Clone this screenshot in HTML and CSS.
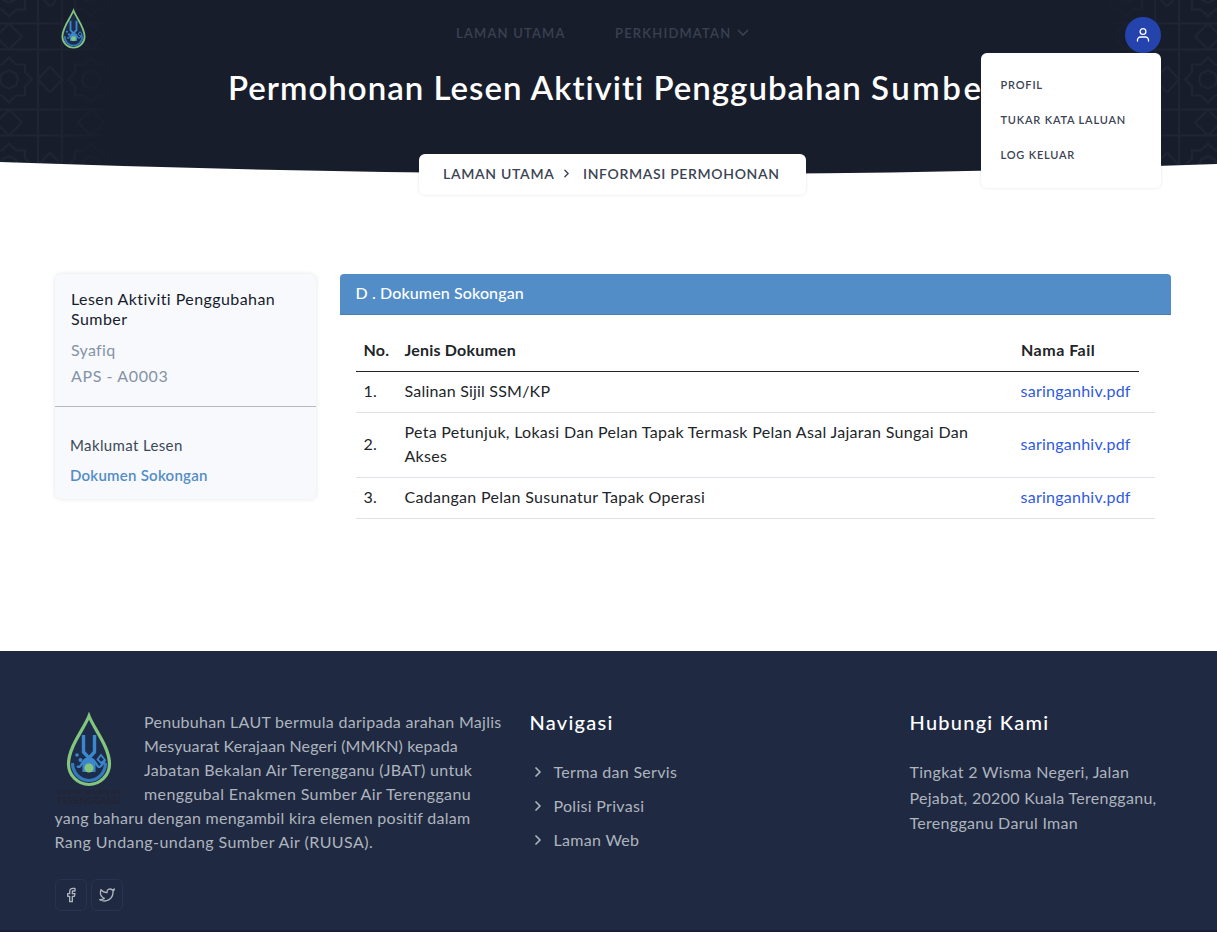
FILE: index.html
```html
<!DOCTYPE html>
<html lang="ms">
<head>
<meta charset="utf-8">
<title>Informasi Permohonan</title>
<link rel="stylesheet" href="styles.css">
</head>
<body>
<svg class="defs" width="0" height="0" aria-hidden="true">
  <defs>
    <symbol id="drop" viewBox="0 0 46 76">
      <path d="M23 4C18 17 2.500 35 2.500 52A20.500 20.500 0 0 0 43.500 52C43.500 35 28 17 23 4Z" fill="#1d2c4a" stroke="#83c57c" stroke-width="3.200"/>
      <path d="M6.500 51A16.500 17.500 0 0 0 39.500 51" fill="none" stroke="#3579bd" stroke-width="3.200"/>
      <path d="M17.500 23V40L23 46L28.500 40V23" fill="none" stroke="#3c87cb" stroke-width="3.400"/>
      <path d="M11 54C15 58 16 48 20 47H26C30 48 31 58 35 54L39 49" fill="none" stroke="#3c87cb" stroke-width="2.200"/>
      <path d="M16.500 60V52L20 46H26L29.500 52V60Z" fill="#3c87cb"/>
      <circle cx="11" cy="43" r="1.800" fill="#3c87cb"/><circle cx="14.500" cy="48" r="2" fill="#3c87cb"/>
      <path d="M35 43L39 48L35 51L31.500 47.500Z" fill="none" stroke="#3c87cb" stroke-width="1.800"/>
      <circle cx="23" cy="56" r="4.500" fill="#83c57c"/>
    </symbol>
    <symbol id="chev" viewBox="0 0 24 24"><path d="M9 18l6-6-6-6" fill="none" stroke="currentColor" stroke-width="2.600" stroke-linecap="round" stroke-linejoin="round"/></symbol>
    <pattern id="tile" width="82" height="86" patternUnits="userSpaceOnUse" x="-32" y="36.500">
      <g fill="none" stroke="#2a3240" stroke-width="2.200">
        <path d="M41 21L48 28H57V36L64 43L57 50V59H48L41 66L34 59H25V50L18 43L25 36V28H34Z"/>
        <path d="M41 34L48 37L50 43L48 49L41 52L34 49L32 43L34 37Z"/>
        <path d="M0 30L12 43L0 56M82 30L70 43L82 56M28 0L41 13L54 0M28 86L41 73L54 86"/>
        <path d="M12 13V73M70 13V73M12 13H70M12 73H70"/>
        <path d="M0 13H12V0M70 0V13H82M0 73H12V86M70 86V73H82"/>
      </g>
    </pattern>
  </defs>
</svg>

<header class="hero">
  <svg class="ornament left" width="120" height="176"><rect width="120" height="176" fill="url(#tile)"/></svg>
  <svg class="ornament right" width="120" height="176"><rect width="120" height="176" fill="url(#tile)"/></svg>
  <nav class="topbar">
    <svg class="brand" width="26" height="43"><use href="#drop"/></svg>
    <div class="menu">
      <a class="menu-home">LAMAN UTAMA</a>
      <a class="menu-serv">PERKHIDMATAN</a>
      <svg class="menu-arrow" width="12" height="8" viewBox="0 0 12 8"><path d="M1.500 1.500L6 6l4.500-4.500" fill="none" stroke="currentColor" stroke-width="1.700" stroke-linecap="round"/></svg>
    </div>
    <div class="user">
      <svg width="14" height="16" viewBox="0 0 14 16" fill="none" stroke="#fff" stroke-width="1.300" stroke-linecap="round"><circle cx="7" cy="4.500" r="2.900"/><path d="M1.500 14v-1a3 3 0 0 1 3-3h5a3 3 0 0 1 3 3v1"/></svg>
    </div>
  </nav>
  <h1 class="title">Permohonan Lesen Aktiviti Penggubahan <span class="title-end">Sumber</span></h1>
  <svg class="curve" viewBox="0 0 1217 16" preserveAspectRatio="none"><path d="M0 2Q640 25 1217 4V16H0Z" fill="#fff"/></svg>
  <div class="crumbs">
    <span class="crumb-home">LAMAN UTAMA</span>
    <svg class="crumb-arrow" width="13" height="13"><use href="#chev"/></svg>
    <span class="crumb-here">INFORMASI PERMOHONAN</span>
  </div>
  <div class="dropdown">
    <a>PROFIL</a>
    <a>TUKAR KATA LALUAN</a>
    <a>LOG KELUAR</a>
  </div>
</header>

<main class="main">
  <aside class="side">
    <div class="side-top">
      <h2><span>Lesen Aktiviti Penggubahan</span><br>Sumber</h2>
      <p>Syafiq</p>
      <p class="code">APS - A0003</p>
    </div>
    <div class="side-nav">
      <a class="side-link">Maklumat Lesen</a>
      <a class="side-link active">Dokumen Sokongan</a>
    </div>
  </aside>
  <section class="card">
    <div class="card-head">D . Dokumen Sokongan</div>
    <table class="docs">
      <colgroup><col class="c-no"><col class="c-type"><col class="c-file"><col class="c-end"></colgroup>
      <thead><tr><th>No.</th><th>Jenis Dokumen</th><th class="th-file">Nama Fail</th></tr></thead>
      <tbody>
        <tr><td>1.</td><td class="tight">Salinan Sijil SSM/KP</td><td><a>saringanhiv.pdf</a></td><td></td></tr>
        <tr><td>2.</td><td><span>Peta Petunjuk, Lokasi Dan Pelan Tapak Termask Pelan Asal Jajaran Sungai Dan</span><br>Akses</td><td><a>saringanhiv.pdf</a></td><td></td></tr>
        <tr><td>3.</td><td>Cadangan Pelan Susunatur Tapak Operasi</td><td><a>saringanhiv.pdf</a></td><td></td></tr>
      </tbody>
    </table>
  </section>
</main>

<footer class="footer">
  <div class="about">
    <svg class="foot-logo" width="68" height="96" viewBox="0 0 68 96">
      <use href="#drop" x="11" y="2" width="46" height="76"/>
      <text x="2" y="84" textLength="64" lengthAdjust="spacingAndGlyphs" class="logo-sm">JABATAN SUMBER AIR</text>
      <text x="2" y="94" textLength="64" lengthAdjust="spacingAndGlyphs" class="logo-lg">TERENGGANU</text>
    </svg>
    <p><span class="l1">Penubuhan LAUT bermula daripada arahan Majlis</span><br><span class="l2">Mesyuarat Kerajaan Negeri (MMKN) kepada</span><br><span class="l3">Jabatan Bekalan Air Terengganu (JBAT) untuk</span><br><span class="l4">menggubal Enakmen Sumber Air Terengganu</span><br><span class="l5">yang baharu dengan mengambil kira elemen positif dalam</span><br><span class="l6">Rang Undang-undang Sumber Air (RUUSA).</span></p>
    <div class="social">
      <a><svg width="16" height="16" viewBox="0 0 24 24"><path d="M18 2h-3a5 5 0 0 0-5 5v3H7v4h3v8h4v-8h3l1-4h-4V7a1 1 0 0 1 1-1h3z"/></svg></a>
      <a><svg width="16" height="16" viewBox="0 0 24 24"><path d="M23 3a10.900 10.900 0 0 1-3.140 1.530 4.480 4.480 0 0 0-7.860 3v1A10.660 10.660 0 0 1 3 4s-4 9 5 13a11.640 11.640 0 0 1-7 2c9 5 20 0 20-11.500a4.500 4.500 0 0 0-.08-.83A7.720 7.720 0 0 0 23 3z"/></svg></a>
    </div>
  </div>
  <div class="links">
    <h3>Navigasi</h3>
    <a><svg width="16" height="16"><use href="#chev"/></svg><span>Terma dan Servis</span></a>
    <a><svg width="16" height="16"><use href="#chev"/></svg><span>Polisi Privasi</span></a>
    <a><svg width="16" height="16"><use href="#chev"/></svg><span>Laman Web</span></a>
  </div>
  <div class="contact">
    <h3>Hubungi Kami</h3>
    <p><span>Tingkat 2 Wisma Negeri, Jalan</span><br><span>Pejabat, 20200 Kuala Terengganu,</span><br><span>Terengganu Darul Iman</span></p>
  </div>
</footer>
</body>
</html>
```
FILE: styles.css
```css
* { box-sizing: border-box; }
body {
  margin: 0;
  width: 1217px;
  height: 932px;
  overflow: hidden;
  background: #fff;
  font-family: Lato, "Open Sans", sans-serif;
  font-size: 16px;
  line-height: 24px;
  color: #212529;
}
h1, h2, h3, p { margin: 0; font-weight: 400; }
span, a, h1, th { white-space: nowrap; }
.defs { position: absolute; }

.hero { position: relative; height: 176px; background: #181d2c; }
.ornament { position: absolute; top: 0; opacity: .38; }
.ornament.left { left: 0; mask-image: linear-gradient(to right, #000 40%, transparent); }
.ornament.right { right: 0; transform: scaleX(-1); mask-image: linear-gradient(to right, #000 40%, transparent); }
.topbar { position: relative; display: flex; height: 68px; padding: 0 56px 0 61px; }
.brand { margin-top: 8px; width: 25px; height: 42px; }
.menu { display: flex; align-items: center; height: 20px; margin: 23px 0 0 370px; color: #3a4151; font-size: 13px; font-weight: 600; }
.menu-home { width: 159px; letter-spacing: 1.200px; }
.menu-serv { width: 122px; letter-spacing: 1.200px; }
.user { display: flex; align-items: center; justify-content: center; width: 36px; height: 36px; margin: 17px 0 0 auto; border-radius: 50%; background: #2443ac; }
.title { position: relative; padding-left: 228px; font-size: 33px; line-height: 38px; font-weight: 600; letter-spacing: 1px; color: #fff; }
.title-end { letter-spacing: 2.600px; }
.curve { position: absolute; left: 0; bottom: 0; width: 1217px; height: 16px; }
.crumbs {
  position: absolute; left: 419px; top: 154px; width: 387px; height: 41px;
  display: flex; align-items: center; padding: 0 0 2px 24px;
  border-radius: 6px; background: #fff; box-shadow: 0 0 3px rgba(60, 72, 88, .15);
  color: #3c4353; font-size: 14px; font-weight: 600;
}
.crumb-home { width: 117px; letter-spacing: .7px; }
.crumb-arrow { margin-right: 10px; }
.crumb-here { letter-spacing: .65px; }
.dropdown {
  position: absolute; left: 981px; top: 53px; width: 180px; height: 135px;
  display: flex; flex-direction: column; padding: 14px 19.500px;
  border-radius: 6px; background: #fff; box-shadow: 0 0 3px rgba(60, 72, 88, .15);
  color: #3c4353; font-size: 11px; line-height: 35px; font-weight: 600; letter-spacing: .8px;
}

.main { display: grid; grid-template-columns: 261px 831px; column-gap: 24px; align-items: start; height: 475px; padding: 98px 0 0 55px; }
.side { height: 225px; border-radius: 6px; background: #f8f9fc; box-shadow: 0 0 4px rgba(60, 72, 88, .15); }
.side-top { height: 133px; padding: 15px 16px; border-bottom: 1px solid #b5babf; color: #8492a6; line-height: 26px; }
.side-top h2 { margin-bottom: 8px; font-size: 16px; line-height: 20px; color: #161c2d; letter-spacing: .43px; }
.side-top p { letter-spacing: .3px; }
.side-top .code { letter-spacing: .6px; }
.side-nav { display: flex; flex-direction: column; padding: 23px 15px; font-size: 15px; line-height: 30px; color: #3c4858; letter-spacing: .37px; }
.side-link.active { padding-left: 0; color: #528dc6; font-weight: 600; letter-spacing: .25px; }
.card-head { height: 41px; padding: 0 15.500px; border-radius: 4px 4px 0 0; border-bottom: 1px solid #4a7fb2; background: #528dc8; color: #fff; line-height: 38px; font-weight: 500; letter-spacing: .12px; }
.docs { width: 799px; margin: 16px 0 0 16px; border-collapse: collapse; table-layout: fixed; letter-spacing: .3px; }
.c-no { width: 41px; }
.c-type { width: 616px; }
.c-file { width: 126px; }
.c-end { width: 16px; }
.docs th { padding: 7px 8px 9px 7.500px; border-bottom: 1px solid #212529; text-align: left; font-weight: 700; letter-spacing: .2px; }
.docs .th-file { padding-left: 8px; letter-spacing: .5px; }
.docs td { padding: 7px 8px 9px 7.500px; border-bottom: 1px solid #dee2e6; vertical-align: middle; }
.docs .tight { letter-spacing: .2px; }
.docs a { color: #2f5ae0; letter-spacing: .25px; }

.footer { display: grid; grid-template-columns: 475px 380px 280px; height: 281px; padding: 59px 0 0 54.500px; border-bottom: 2px solid #182036; background: #202942; color: #adb5bd; letter-spacing: .3px; }
.foot-logo { float: left; margin-right: 21.500px; overflow: visible; }
.logo-sm { font: 700 6px Lato, sans-serif; fill: #222431; }
.logo-lg { font: 700 9px Lato, sans-serif; fill: #222431; }
.l1, .l5 { letter-spacing: .28px; }
.l2 { letter-spacing: .12px; }
.l4 { letter-spacing: .4px; }
.l6 { letter-spacing: .43px; }
.social { display: flex; gap: 4px; margin: 25px 0 0 .5px; }
.social a { display: flex; align-items: center; justify-content: center; width: 32px; height: 32px; border: 1px solid #283353; border-radius: 6px; }
.social svg { fill: none; stroke: #adb5bd; stroke-width: 2; stroke-linejoin: round; }
.footer h3 { font-size: 20px; line-height: 24px; letter-spacing: 1.250px; font-weight: 500; color: #fff; margin-bottom: 21px; }
.links { display: flex; flex-direction: column; }
.links a { display: flex; align-items: center; gap: 8px; height: 34px; }
.contact h3 { margin-bottom: 25px; }
.contact p { line-height: 25.500px; }
```
